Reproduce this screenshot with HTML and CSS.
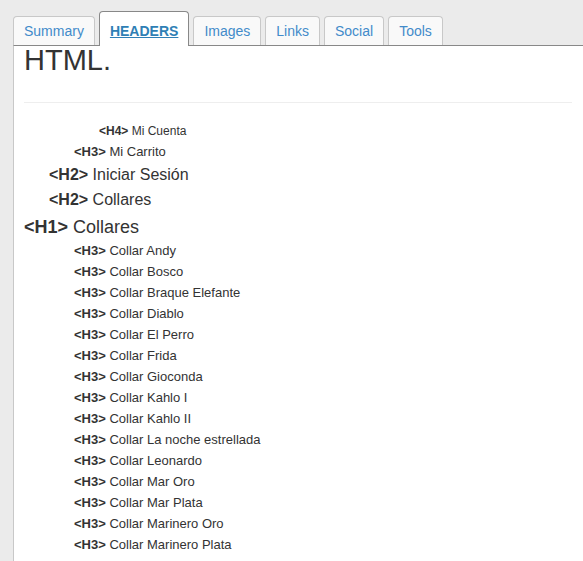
FILE: index.html
```
<!DOCTYPE html>
<html>
<head>
<meta charset="utf-8">
<link rel="stylesheet" href="styles.css">
</head>
<body>
<ul class="tabs">
  <li class="tab">Summary</li>
  <li class="tab active">HEADERS</li>
  <li class="tab">Images</li>
  <li class="tab">Links</li>
  <li class="tab">Social</li>
  <li class="tab">Tools</li>
</ul>
<div class="panel">
  <p class="intro">HTML.</p>
  <hr class="sep">
  <ul class="outline">
    <li class="h4"><b>&lt;H4&gt;</b> Mi Cuenta</li>
    <li class="h3"><b>&lt;H3&gt;</b> Mi Carrito</li>
    <li class="h2"><b>&lt;H2&gt;</b> Iniciar Sesión</li>
    <li class="h2"><b>&lt;H2&gt;</b> Collares</li>
    <li class="h1"><b>&lt;H1&gt;</b> Collares</li>
    <li class="h3"><b>&lt;H3&gt;</b> Collar Andy</li>
    <li class="h3"><b>&lt;H3&gt;</b> Collar Bosco</li>
    <li class="h3"><b>&lt;H3&gt;</b> Collar Braque Elefante</li>
    <li class="h3"><b>&lt;H3&gt;</b> Collar Diablo</li>
    <li class="h3"><b>&lt;H3&gt;</b> Collar El Perro</li>
    <li class="h3"><b>&lt;H3&gt;</b> Collar Frida</li>
    <li class="h3"><b>&lt;H3&gt;</b> Collar Gioconda</li>
    <li class="h3"><b>&lt;H3&gt;</b> Collar Kahlo I</li>
    <li class="h3"><b>&lt;H3&gt;</b> Collar Kahlo II</li>
    <li class="h3"><b>&lt;H3&gt;</b> Collar La noche estrellada</li>
    <li class="h3"><b>&lt;H3&gt;</b> Collar Leonardo</li>
    <li class="h3"><b>&lt;H3&gt;</b> Collar Mar Oro</li>
    <li class="h3"><b>&lt;H3&gt;</b> Collar Mar Plata</li>
    <li class="h3"><b>&lt;H3&gt;</b> Collar Marinero Oro</li>
    <li class="h3"><b>&lt;H3&gt;</b> Collar Marinero Plata</li>
    <li class="h3"><b>&lt;H3&gt;</b> Collar Terciopelo de Oro</li>
  </ul>
</div>
</body>
</html>
```
FILE: styles.css
```
html, body {
  margin: 0;
  padding: 0;
  height: 561px;
  overflow: hidden;
}
body {
  background: #ebebeb;
  font-family: "Liberation Sans", Arial, sans-serif;
  color: #333;
}
.tabs {
  list-style: none;
  margin: 0;
  padding: 11px 0 0 13px;
  display: flex;
  align-items: flex-end;
  gap: 4px;
  height: 45px;
  box-sizing: border-box;
}
.tab {
  height: 29px;
  box-sizing: border-box;
  line-height: 28px;
  padding: 0 10px;
  border: 1px solid #c8c8c8;
  border-bottom: none;
  border-radius: 4px 4px 0 0;
  background: #f9f9f9;
  color: #428bca;
  font-size: 14px;
}
.tab.active {
  height: 35px;
  padding: 5px 10px 1px;
  margin-bottom: -1px;
  background: #fff;
  border-color: #888;
  position: relative;
  z-index: 1;
  font-weight: bold;
  font-size: 14px;
  text-decoration: underline;
  color: #2f7fb5;
}
.panel {
  margin-left: 13px;
  border-left: 1px solid #c8c8c8;
  border-top: 1px solid #888;
  background: #fff;
  height: 600px;
  padding: 0 11px 0 10px;
}
.intro {
  margin: -2px 0 0;
  font-size: 29px;
  line-height: 32px;
  color: #333;
}
.sep {
  margin: 26px 0 0;
  border: none;
  border-top: 1px solid #eee;
  height: 0;
}
.outline {
  list-style: none;
  margin: 18px 0 0;
  padding: 0;
}
.outline li {
  white-space: nowrap;
}
.outline .h1 {
  font-size: 18px;
  line-height: 28px;
  padding-top: 1px;
  margin-bottom: -1px;
}
.outline .h2 {
  font-size: 16px;
  line-height: 25px;
  padding-left: 25px;
}
.outline .h3 {
  font-size: 13px;
  line-height: 21px;
  padding-left: 50px;
}
.outline .h4 {
  font-size: 12px;
  line-height: 20px;
  padding-left: 75px;
}
```
